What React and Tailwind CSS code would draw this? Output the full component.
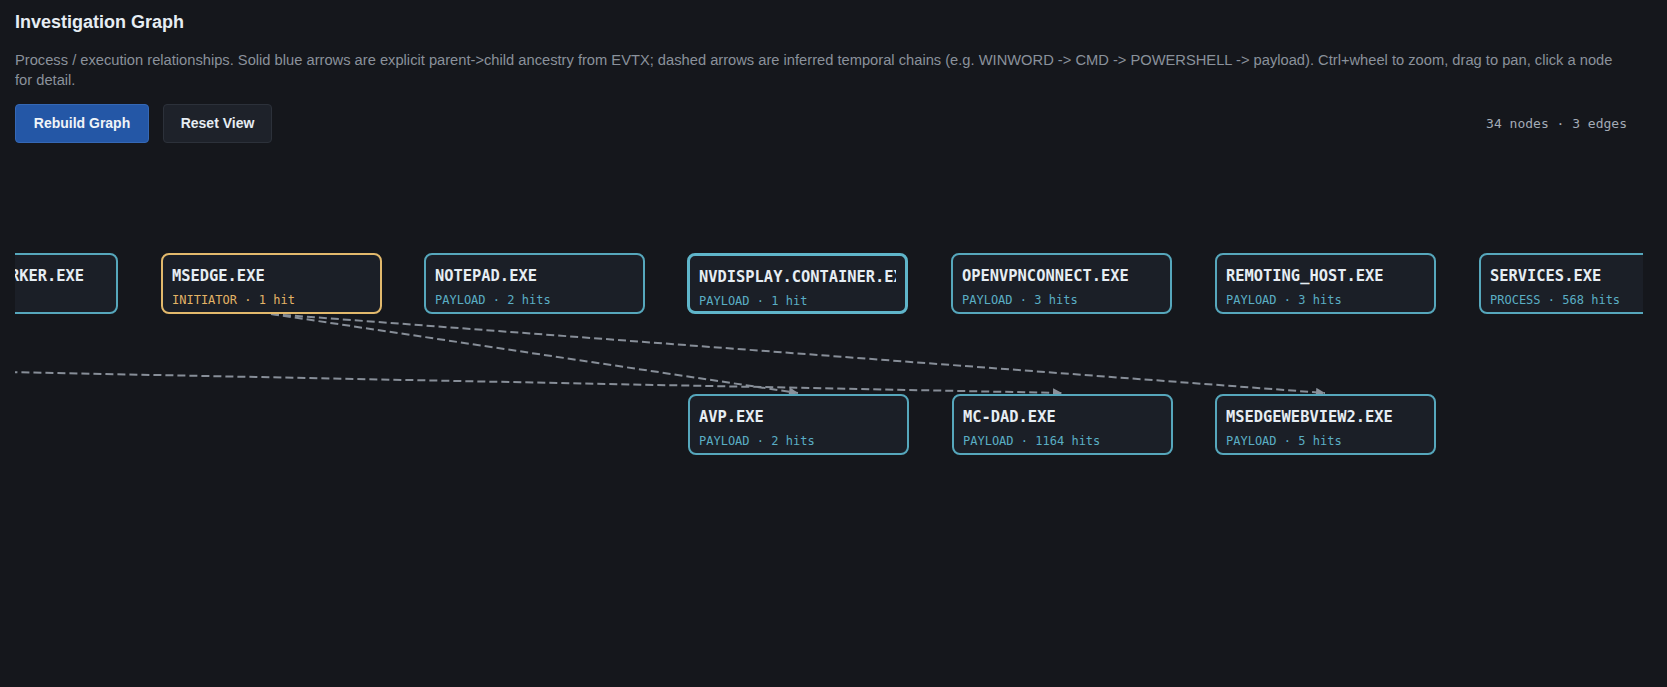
import React, { useState } from "react";

const nodes = [
  { id: "mouso", label: "MOUSOCOREWORKER.EXE", kind: "SYSTEM", hits: 1, x: -118, y: 98 },
  { id: "msedge", label: "MSEDGE.EXE", kind: "INITIATOR", hits: 1, x: 146, y: 98 },
  { id: "notepad", label: "NOTEPAD.EXE", kind: "PAYLOAD", hits: 2, x: 409, y: 98 },
  { id: "nvdisplay", label: "NVDISPLAY.CONTAINER.EXE", kind: "PAYLOAD", hits: 1, x: 672, y: 98 },
  { id: "openvpn", label: "OPENVPNCONNECT.EXE", kind: "PAYLOAD", hits: 3, x: 936, y: 98 },
  { id: "remoting", label: "REMOTING_HOST.EXE", kind: "PAYLOAD", hits: 3, x: 1200, y: 98 },
  { id: "services", label: "SERVICES.EXE", kind: "PROCESS", hits: 568, x: 1464, y: 98 },
  { id: "avp", label: "AVP.EXE", kind: "PAYLOAD", hits: 2, x: 673, y: 239 },
  { id: "mcdad", label: "MC-DAD.EXE", kind: "PAYLOAD", hits: 1164, x: 937, y: 239 },
  { id: "webview", label: "MSEDGEWEBVIEW2.EXE", kind: "PAYLOAD", hits: 5, x: 1200, y: 239 },
];

// inferred chains (dashed); first one starts from a node panned off to the left
const edges = [
  { from: [256, 159], to: [783, 238] },
  { from: [256, 159], to: [1310, 238] },
  { from: [-2933, 159], to: [1047, 238] },
];

const mono = "font-['DejaVu_Sans_Mono','Liberation_Mono',monospace]";

const GraphNode = ({ node, selected, onSelect }) => {
  const initiator = node.kind === "INITIATOR";
  return (
    <div
      onClick={() => onSelect(node.id)}
      className={`absolute w-[221px] h-[61px] rounded-[8px] bg-[#1b1f27] cursor-pointer ${
        selected ? "border-[3px] border-[#5fb5ca]" : "border-2"
      } ${initiator ? "border-[#e2b96c]" : selected ? "" : "border-[#56a7bc]"} px-[9px] pt-[11px] ${mono}`}
      style={{ left: node.x, top: node.y }}
    >
      <div className="overflow-hidden whitespace-nowrap text-[15.4px] leading-[20px] font-bold text-[#e6edf3]">
        {node.label}
      </div>
      <div
        className={`mt-[6px] whitespace-nowrap text-[12px] leading-[16px] ${
          initiator ? "text-[#e3b366]" : "text-[#5aaec4]"
        }`}
      >
        {node.kind} · {node.hits} {node.hits === 1 ? "hit" : "hits"}
      </div>
    </div>
  );
};

const App = () => {
  const [selected, setSelected] = useState("nvdisplay");

  return (
    <div className="h-screen flex flex-col bg-[#15171c] px-[15px] pt-[10px] overflow-hidden font-['Liberation_Sans',Arial,sans-serif]">
      <div className="pr-[25px]">
        <h1 className="text-[18px] leading-[24px] font-bold text-[#e6edf3]">Investigation Graph</h1>
        <p className="mt-[16px] text-[14.7px] leading-[20px] text-[#8a919b]">
          Process / execution relationships. Solid blue arrows are explicit parent-&gt;child ancestry from
          EVTX; dashed arrows are inferred temporal chains (e.g. WINWORD -&gt; CMD -&gt; POWERSHELL -&gt;
          payload). Ctrl+wheel to zoom, drag to pan, click a node for detail.
        </p>
        <div className="mt-[14px] flex items-center justify-between">
          <div className="flex items-center gap-[14px]">
            <button className="h-[39px] w-[134px] rounded-[4px] border border-[#3568b5] bg-[#2457a6] text-[14px] font-bold text-[#f0f4f8]">
              Rebuild Graph
            </button>
            <button className="h-[39px] w-[109px] rounded-[4px] border border-[#2c313a] bg-[#1e222a] text-[14px] font-bold text-[#e6edf3]">
              Reset View
            </button>
          </div>
          <div className={`text-[13px] text-[#a3abb6] ${mono}`}>34 nodes · 3 edges</div>
        </div>
      </div>

      <div className="relative flex-1 mt-[12px] mr-[9px] overflow-hidden">
        <svg className="absolute inset-0 w-full h-full overflow-visible">
          <defs>
            <marker
              id="arrow"
              viewBox="0 0 10 10"
              refX="10"
              refY="5"
              markerWidth="10"
              markerHeight="9"
              markerUnits="userSpaceOnUse"
              orient="auto"
            >
              <path d="M0,0 L10,5 L0,10 z" fill="#8a919b" />
            </marker>
          </defs>
          {edges.map((e, i) => (
            <line
              key={i}
              x1={e.from[0]}
              y1={e.from[1]}
              x2={e.to[0]}
              y2={e.to[1]}
              stroke="#878e98"
              strokeWidth="2"
              strokeDasharray="8 4"
              markerEnd="url(#arrow)"
            />
          ))}
        </svg>
        {nodes.map((n) => (
          <GraphNode key={n.id} node={n} selected={selected === n.id} onSelect={setSelected} />
        ))}
      </div>
    </div>
  );
};

export default App;
